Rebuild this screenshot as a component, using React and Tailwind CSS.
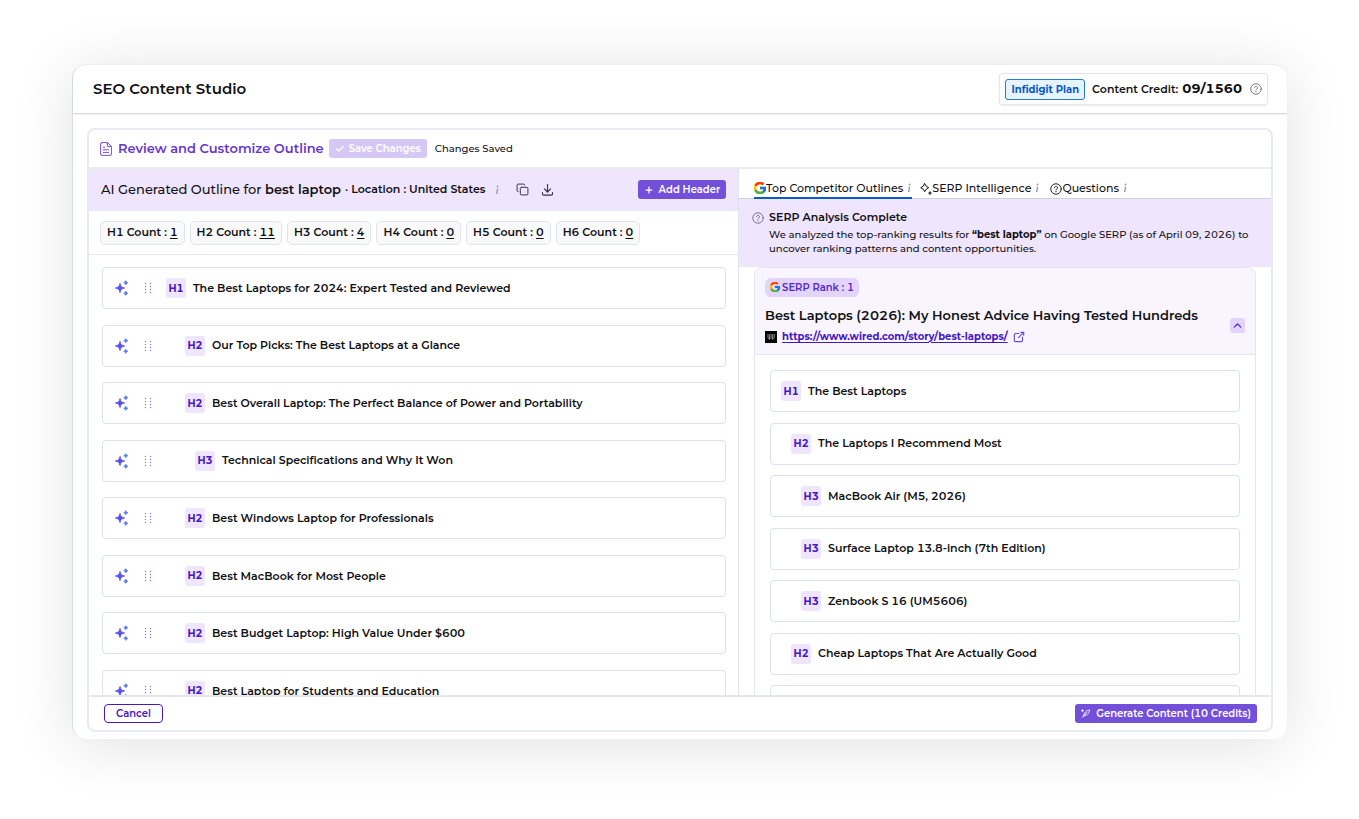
import { Check, ChevronUp, Copy, Plus } from 'lucide-react'
import { FcGoogle } from 'react-icons/fc'
import { TbDownload, TbExternalLink } from 'react-icons/tb'

const counts = [
  { level: 'H1', count: 1 },
  { level: 'H2', count: 11 },
  { level: 'H3', count: 4 },
  { level: 'H4', count: 0 },
  { level: 'H5', count: 0 },
  { level: 'H6', count: 0 },
]

const outline = [
  { level: 'H1', text: 'The Best Laptops for 2024: Expert Tested and Reviewed' },
  { level: 'H2', text: 'Our Top Picks: The Best Laptops at a Glance' },
  { level: 'H2', text: 'Best Overall Laptop: The Perfect Balance of Power and Portability' },
  { level: 'H3', text: 'Technical Specifications and Why It Won' },
  { level: 'H2', text: 'Best Windows Laptop for Professionals' },
  { level: 'H2', text: 'Best MacBook for Most People' },
  { level: 'H2', text: 'Best Budget Laptop: High Value Under $600' },
  { level: 'H2', text: 'Best Laptop for Students and Education' },
]

// the last row only shows its top edge above the footer
const competitor = [
  { level: 'H1', text: 'The Best Laptops' },
  { level: 'H2', text: 'The Laptops I Recommend Most' },
  { level: 'H3', text: 'MacBook Air (M5, 2026)' },
  { level: 'H3', text: 'Surface Laptop 13.8-inch (7th Edition)' },
  { level: 'H3', text: 'Zenbook S 16 (UM5606)' },
  { level: 'H2', text: 'Cheap Laptops That Are Actually Good' },
  { level: '', text: '' },
]

const outlineIndent = { H1: 'ml-[14px]', H2: 'ml-[33px]', H3: 'ml-[43px]' }
const competitorIndent = { H1: 'ml-0', H2: 'ml-[10px]', H3: 'ml-5' }

function HelpIcon({ className }) {
  return (
    <svg viewBox="0 0 24 24" fill="none" stroke="currentColor" strokeWidth="1.8" strokeLinecap="round" className={className}>
      <circle cx="12" cy="12" r="10.5" />
      <path d="M9 9.5a3 3 0 1 1 4.6 2.5c-1 .6-1.6 1.1-1.6 2.2" />
      <path d="M12 17.4v.1" strokeWidth="2.4" />
    </svg>
  )
}

function InfoIcon({ className }) {
  return (
    <svg viewBox="5.5 3 5 9" fill="currentColor" className={className}>
      <path d="m8.930 6.588-2.290.287-.082.380.450.083c.294.070.352.176.288.469l-.738 3.468c-.194.897.105 1.319.808 1.319.545 0 1.178-.252 1.465-.598l.088-.416c-.2.176-.492.246-.686.246-.275 0-.375-.193-.304-.533zM9 4.500a1 1 0 1 1-2 0 1 1 0 0 1 2 0" />
    </svg>
  )
}

function DocIcon({ className }) {
  return (
    <svg viewBox="0 0 12 14" fill="none" stroke="currentColor" strokeLinejoin="round" strokeLinecap="round" className={className}>
      <path d="M2 .6h5.6l3.8 3.8V12a1.4 1.4 0 0 1-1.4 1.4H2A1.4 1.4 0 0 1 .6 12V2A1.4 1.4 0 0 1 2 .6Z" />
      <path d="M7.4.8v3.8h3.8M3.2 5.2h1.6M3.2 7.8h5.6M3.2 10.4h5.6" />
    </svg>
  )
}

function SparkleIcon({ className }) {
  return (
    <svg viewBox="0 0 14 16" fill="none" className={className}>
      <path d="M5 3.500C5.800 6.600 6.400 7.200 9.600 8 6.400 8.800 5.800 9.400 5 12.500 4.200 9.400 3.600 8.800.4 8 3.600 7.200 4.200 6.600 5 3.500Z" fill="#5b50f0" stroke="#5b50f0" strokeWidth="0.9" strokeLinejoin="round" />
      <path d="M10.800.6 11.500 2 12.900 2.700 11.500 3.400 10.800 4.800 10.100 3.400 8.700 2.700 10.100 2Z" fill="#4f7df5" stroke="#4f7df5" strokeWidth="0.7" />
      <path d="M10.800 11.200 11.500 12.600 12.900 13.300 11.500 14 10.800 15.400 10.100 14 8.700 13.300 10.100 12.600Z" fill="#4f7df5" stroke="#4f7df5" strokeWidth="0.7" />
    </svg>
  )
}

function GripIcon({ className }) {
  return (
    <svg viewBox="0 0 8 12" fill="#8b6cf0" className={className}>
      {[1.5, 4.5, 7.5, 10.5].map((y) => (
        <g key={y}>
          <circle cx="1.5" cy={y} r="0.7" />
          <circle cx="6.5" cy={y} r="0.7" />
        </g>
      ))}
    </svg>
  )
}

function StarsIcon({ className }) {
  return (
    <svg viewBox="0 0 12 12" fill="none" stroke="currentColor" strokeLinejoin="round" strokeLinecap="round" className={className}>
      <path d="M4.700.7 6.200 3.200 8.700 4.700 6.200 6.200 4.700 8.700 3.200 6.200.7 4.700 3.200 3.200Z" />
      <path d="M10 8.800v2.400M8.800 10h2.400" strokeWidth="1.2" />
    </svg>
  )
}

function QuillIcon({ className }) {
  return (
    <svg viewBox="0 0 10 10" fill="none" stroke="currentColor" strokeLinecap="round" strokeLinejoin="round" strokeWidth="0.9" className={className}>
      <path d="M1.500 9.400 6.400 3.800M3 7.600C3 4.600 5.400 1.600 9.400 1c0 3.600-2.600 6.600-6.400 6.600Z" />
      <path d="M1.600.6v2.400M.4 1.800h2.400" />
    </svg>
  )
}

function WiredIcon({ className }) {
  return (
    <svg viewBox="0 0 12 12" fill="none" className={className}>
      <rect width="12" height="12" fill="#000" />
      <path d="M3 3v4l1.500 1.500V3.500M6 3v5M7.600 3v5.500L9.200 7V3" stroke="#aaa" strokeWidth="0.8" />
    </svg>
  )
}

function LevelBadge({ level, className = '' }) {
  return (
    <span className={`flex h-5 w-5 shrink-0 items-center justify-center rounded-[3px] bg-[#efe5fd] text-[10px] font-bold text-[#4617c4] ${className}`}>
      {level}
    </span>
  )
}

export default function App() {
  return (
    <div className="flex h-screen bg-white px-[72px] pt-16 pb-20 font-['Montserrat','Inter',sans-serif] text-[#111114] tabular-nums">
      <div className="flex min-w-0 flex-1 flex-col rounded-[14px] border-t border-l border-t-[#e8eef4] border-l-[#d9dde5] bg-white shadow-[0_6px_60px_rgba(0,0,0,0.12)]">
        {/* Header */}
        <header className="flex h-[49px] shrink-0 items-center justify-between border-b border-[#d9dce2] pr-[19px] pl-5 shadow-[0_1px_1px_rgba(0,0,0,0.05)]">
          <h1 className="text-[15px] font-semibold">SEO Content Studio</h1>
          <div className="flex h-8 items-center rounded-[3px] border border-[#e4e6eb] px-[5px] shadow-[0_1px_2px_rgba(0,0,0,0.08)]">
            <span className="flex h-[21px] items-center rounded-[3px] border border-[#2878d0] bg-[#e6f4ff] px-[5px] text-[10px] font-bold text-[#0958c8]">
              Infidigit Plan
            </span>
            <span className="ml-[7px] text-[11px] font-semibold">Content Credit:</span>
            <span className="ml-1 text-[13px] font-bold">09/1560</span>
            <HelpIcon className="ml-2 h-3 w-3 text-[#6b6b80]" />
          </div>
        </header>

        <main className="mx-[14px] mt-[14px] mb-[7px] flex min-h-0 flex-1 flex-col overflow-hidden rounded-lg border-2 border-[#e7ebf3]">
          <div className="flex h-[39px] shrink-0 items-center border-b-2 border-[#e9ebef] pl-[11px]">
            <DocIcon className="h-[14px] w-3 text-[#7a4fdb]" />
            <h2 className="ml-[6px] text-[13px] font-semibold text-[#6636d0]">Review and Customize Outline</h2>
            <button disabled className="ml-[5px] flex h-[19px] items-center rounded-[3px] bg-[#d5c8f4] px-[6px] text-[10px] font-semibold text-white">
              <Check className="mr-1 h-[10px] w-[10px]" strokeWidth={3} />
              Save Changes
            </button>
            <span className="ml-2 text-[10px] font-medium">Changes Saved</span>
          </div>

          <div className="flex min-h-0 flex-1">
            {/* Generated outline */}
            <section className="flex min-w-0 basis-[55%] flex-col border-r border-[#dfe3ea]">
              <div className="flex h-[42px] shrink-0 items-center border-b border-[#e4e9f1] bg-[#efe5fd] px-3">
                <p className="text-[13px] font-medium whitespace-pre">
                  AI Generated Outline for <b className="font-semibold">best laptop</b>
                </p>
                <p className="ml-1 text-[11px] font-semibold">· Location : United States</p>
                <InfoIcon className="ml-[10px] h-[9px] w-[5px] text-[#9c9cae]" />
                <button aria-label="Copy outline" className="ml-4 text-[#33333d]">
                  <Copy className="h-[13px] w-[13px]" strokeWidth={1.8} />
                </button>
                <button aria-label="Download outline" className="ml-[11px] text-[#33333d]">
                  <TbDownload className="h-[15px] w-[15px]" strokeWidth={1.8} />
                </button>
                <button className="ml-auto flex h-[19px] items-center rounded-[3px] bg-[#7350da] px-[6px] text-[10px] font-semibold text-white">
                  <Plus className="mr-[5px] h-[10px] w-[10px]" strokeWidth={3} />
                  Add Header
                </button>
              </div>

              <div className="flex h-11 shrink-0 items-center gap-[5px] border-b border-[#e4e9f1] pl-[11px]">
                {counts.map(({ level, count }) => (
                  <span key={level} className="flex h-6 items-center rounded-[5px] border border-[#dfe5ee] bg-[#f9f9fa] px-[6px] text-[11px] font-semibold whitespace-pre">
                    {level} Count : <u className="underline-offset-2">{count}</u>
                  </span>
                ))}
              </div>

              <div className="min-h-0 flex-1 overflow-hidden px-3 pt-3 pl-[13px]">
                <ul className="flex h-[445px] flex-col justify-between">
                  {outline.map(({ level, text }) => (
                    <li key={text} className="flex h-[42px] items-center rounded-[4px] border border-[#dbe2ec] pl-3">
                      <SparkleIcon className="h-4 w-[14px]" />
                      <GripIcon className="ml-[15px] h-3 w-2" />
                      <LevelBadge level={level} className={outlineIndent[level]} />
                      <span className="ml-[7px] text-[11px] font-semibold">{text}</span>
                    </li>
                  ))}
                </ul>
              </div>
            </section>

            {/* Competitors */}
            <section className="flex min-w-0 flex-1 flex-col">
              <nav className="flex h-[30px] shrink-0 items-end gap-2 border-b border-[#cfd2da] pl-[15px] text-[11px] font-medium">
                <button className="-mb-px flex h-5 items-center border-b-2 border-[#0d5cc4]">
                  <FcGoogle viewBox="5 5 38 38" className="h-3 w-3" />
                  Top Competitor Outlines
                  <InfoIcon className="mb-[2px] ml-1 h-[9px] w-[5px] text-[#9c9cae]" />
                </button>
                <button className="flex h-[19px] items-center">
                  <StarsIcon className="h-3 w-3" />
                  SERP Intelligence
                  <InfoIcon className="mb-[2px] ml-1 h-[9px] w-[5px] text-[#9c9cae]" />
                </button>
                <button className="ml-[2px] flex h-[19px] items-center">
                  <HelpIcon className="h-3 w-3" />
                  Questions
                  <InfoIcon className="mb-[2px] ml-1 h-[9px] w-[5px] text-[#9c9cae]" />
                </button>
              </nav>

              <div className="flex h-[68px] shrink-0 bg-[#efe5fd] pt-[10px] pl-[13px]">
                <HelpIcon className="mt-[3px] h-3 w-3 shrink-0 text-[#6b6b80]" />
                <div className="ml-[5px] pr-5">
                  <h3 className="text-[11px] leading-4 font-semibold">SERP Analysis Complete</h3>
                  <p className="mt-[3px] text-[10px] leading-[14px] font-medium">
                    We analyzed the top-ranking results for <b>“best laptop”</b> on Google SERP (as of April 09, 2026) to uncover ranking patterns and content opportunities.
                  </p>
                </div>
              </div>

              <div className="min-h-0 flex-1 overflow-hidden px-[15px]">
                <article className="rounded-t-lg border border-[#e4e6ee]">
                  <div className="flex h-[87px] items-center justify-between rounded-t-lg border-b border-[#e4e6ee] bg-[#f8f5ff] px-[10px]">
                    <div>
                      <span className="flex h-[19px] w-fit items-center rounded-md bg-[#e2d4fc] px-[5px] text-[10px] font-semibold text-[#5629cc]">
                        <FcGoogle viewBox="5 5 38 38" className="mr-[2px] h-[10px] w-[10px]" />
                        SERP Rank : 1
                      </span>
                      <h3 className="mt-2 text-[13px] leading-5 font-semibold">
                        Best Laptops (2026): My Honest Advice Having Tested Hundreds
                      </h3>
                      <div className="mt-1 flex items-center">
                        <WiredIcon className="h-3 w-3" />
                        <a href="https://www.wired.com/story/best-laptops/" className="ml-[5px] text-[10px] leading-4 font-bold text-[#4617c4] underline underline-offset-2">
                          https://www.wired.com/story/best-laptops/
                        </a>
                        <TbExternalLink className="ml-1 h-[14px] w-[14px] text-[#6f48d8]" />
                      </div>
                    </div>
                    <button aria-label="Collapse" className="mt-7 flex h-[15px] w-[15px] items-center justify-center rounded-[3px] bg-[#e2d4fc] text-[#4617c4]">
                      <ChevronUp className="h-[13px] w-[13px]" strokeWidth={2} />
                    </button>
                  </div>
                  <ul className="mx-[15px] mt-[15px] flex h-[357px] flex-col justify-between">
                    {competitor.map(({ level, text }) => (
                      <li key={text} className="flex h-[42px] items-center rounded-[4px] border border-[#dbe2ec] pl-[10px]">
                        {level && <LevelBadge level={level} className={competitorIndent[level]} />}
                        <span className="ml-[7px] text-[11px] font-semibold">{text}</span>
                      </li>
                    ))}
                  </ul>
                </article>
              </div>
            </section>
          </div>

          <footer className="flex h-[35px] shrink-0 items-center justify-between border-t-2 border-[#e4e6eb] pr-[14px] pl-[15px]">
            <button className="h-[19px] rounded-[4px] border border-[#4617c4] px-[11px] text-[10px] leading-4 font-semibold text-[#4617c4]">
              Cancel
            </button>
            <button className="flex h-[19px] items-center rounded-[3px] bg-[#7350da] px-[6px] text-[10px] font-semibold text-white">
              <QuillIcon className="mr-[6px] h-[9px] w-[9px]" />
              Generate Content (10 Credits)
            </button>
          </footer>
        </main>
      </div>
    </div>
  )
}
